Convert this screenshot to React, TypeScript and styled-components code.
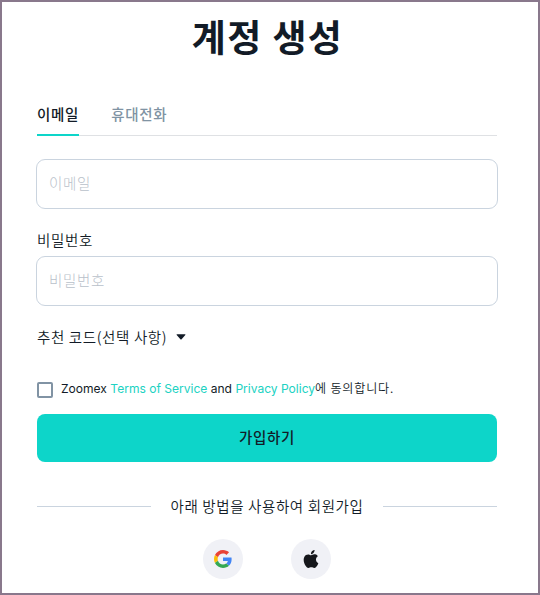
import React, { useState } from 'react';
import styled, { createGlobalStyle } from 'styled-components';

const ink = '#121b27';
const teal = '#0dd5c9';
const korean = '"Noto Sans CJK KR", sans-serif';

const GlobalStyle = createGlobalStyle`
  * { box-sizing: border-box; }
  body { margin: 0; background: #fff; }
`;

const Card = styled.main`
  width: 540px;
  height: 595px;
  padding: 0 41px 0 35px;
  overflow: hidden;
  border: 2px solid #89788c;
  background: #fff;
  color: ${ink};
  font-family: ${korean};
  font-size: 14px;
`;

const Title = styled.h1`
  height: 72px;
  margin: 0;
  font-size: 37px;
  line-height: 69px;
  font-weight: 700;
  text-align: center;
  text-indent: 1px;
  letter-spacing: 1.4px;
  white-space: nowrap;
`;

const Tabs = styled.div`
  display: flex;
  gap: 32px;
  height: 42px;
  margin-top: 20px;
  box-shadow: inset 0 -1px #dfe1e4;
`;

const Tab = styled.button<{ $active?: boolean }>`
  height: 42px;
  padding: 0;
  border: 0;
  border-bottom: 2px solid ${({ $active }) => ($active ? teal : 'transparent')};
  background: none;
  color: ${({ $active }) => ($active ? ink : '#8093a3')};
  font: 500 14.5px/40px ${korean};
  letter-spacing: 0.7px;
  white-space: nowrap;
`;

const Field = styled.input`
  display: block;
  width: 462px;
  height: 50px;
  margin: 0 -1px;
  padding: 0 12px 4px;
  border: 1px solid #cad4df;
  border-radius: 9px;
  outline: none;
  color: ${ink};
  font: 300 14.5px ${korean};
  letter-spacing: 0.7px;

  &::placeholder { color: #b9c1ca; opacity: 1; }
`;

const EmailField = styled(Field)`
  margin-top: 23px;
`;

const Label = styled.label`
  display: block;
  height: 24px;
  margin-top: 23px;
  font-size: 14.5px;
  font-weight: 350;
  line-height: 16px;
  letter-spacing: 0.7px;
`;

const Referral = styled.button`
  display: flex;
  align-items: center;
  gap: 9px;
  height: 24px;
  margin-top: 19px;
  padding: 0;
  border: 0;
  background: none;
  color: ${ink};
  font: 350 14.5px/24px ${korean};
  letter-spacing: 0.62px;
`;

const Agreement = styled.div`
  display: flex;
  align-items: center;
  gap: 8px;
  height: 16px;
  margin-top: 33px;
  font-size: 12px;
  white-space: nowrap;
`;

const Checkbox = styled.input`
  appearance: none;
  width: 16px;
  height: 16px;
  margin: 0;
  border: 2px solid #8193a4;
  border-radius: 2px;

  &:checked { background: ${teal}; }
`;

const Terms = styled.span`
  height: 20px;
  font: 12.05px/15px Inter, ${korean};
`;

const KoreanSuffix = styled.span`
  font-family: ${korean};
  font-weight: 350;
  letter-spacing: 0.8px;
`;

const TermsLink = styled.a`
  color: #20d2c2;
  text-decoration: none;
`;

const Submit = styled.button`
  width: 100%;
  height: 48px;
  margin-top: 16px;
  padding: 0 0 4px;
  border: 0;
  border-radius: 8px;
  background: ${teal};
  color: ${ink};
  font: 500 14.5px ${korean};
  letter-spacing: 0.65px;
`;

const Divider = styled.div`
  display: flex;
  align-items: center;
  justify-content: space-between;
  height: 25px;
  margin-top: 32px;
  font-size: 14.5px;
  font-weight: 350;
  letter-spacing: 0.62px;
  white-space: nowrap;
`;

const DividerText = styled.span`
  height: 25px;
  line-height: 23px;
`;

const Rule = styled.span`
  width: 114px;
  height: 1px;
  background: #cad4df;
`;

const Providers = styled.div`
  display: flex;
  justify-content: center;
  gap: 48px;
  margin-top: 20px;
`;

const Provider = styled.button`
  display: grid;
  place-items: center;
  width: 40px;
  height: 40px;
  padding: 0;
  border: 0;
  border-radius: 50%;
  background: #f0f1f6;
`;

function GoogleIcon() {
  return (
    <svg width="18" height="18" viewBox="0 0 48 48">
      <path fill="#EA4335" d="M24 9.5c3.54 0 6.71 1.22 9.21 3.6l6.85-6.85C35.9 2.38 30.47 0 24 0 14.62 0 6.51 5.38 2.56 13.22l7.98 6.19C12.43 13.72 17.74 9.5 24 9.5z" />
      <path fill="#4285F4" d="M46.98 24.55c0-1.57-.15-3.09-.38-4.55H24v9.02h12.94c-.58 2.96-2.26 5.48-4.78 7.18l7.73 6c4.51-4.18 7.09-10.36 7.09-17.65z" />
      <path fill="#FBBC05" d="M10.53 28.59c-.48-1.45-.76-2.99-.76-4.59s.27-3.14.76-4.59l-7.98-6.19C.92 16.46 0 20.12 0 24c0 3.88.92 7.54 2.56 10.78l7.97-6.19z" />
      <path fill="#34A853" d="M24 48c6.48 0 11.93-2.13 15.89-5.81l-7.73-6c-2.15 1.45-4.92 2.3-8.16 2.3-6.26 0-11.57-4.22-13.47-9.91l-7.98 6.19C6.51 42.62 14.62 48 24 48z" />
    </svg>
  );
}

function AppleIcon() {
  return (
    <svg width="18" height="18" viewBox="0 0 24 24" fill="#15171b">
      <path d="M12.152 6.896c-.948 0-2.415-1.078-3.96-1.04-2.04.027-3.91 1.183-4.961 3.014-2.117 3.675-.546 9.103 1.519 12.09 1.013 1.454 2.208 3.09 3.792 3.039 1.52-.065 2.09-.987 3.935-.987 1.831 0 2.35.987 3.96.948 1.637-.026 2.676-1.48 3.676-2.948 1.156-1.688 1.636-3.325 1.662-3.415-.039-.013-3.182-1.221-3.22-4.857-.026-3.04 2.48-4.494 2.597-4.559-1.429-2.09-3.623-2.324-4.39-2.376-2-.156-3.675 1.09-4.61 1.09zM15.53 3.83c.843-1.012 1.4-2.427 1.245-3.83-1.207.052-2.662.805-3.532 1.818-.78.896-1.454 2.338-1.273 3.714 1.338.104 2.715-.688 3.559-1.701" />
    </svg>
  );
}

export default function App() {
  const [tab, setTab] = useState('email');
  return (
    <>
      <GlobalStyle />
      <Card>
        <Title>계정 생성</Title>
        <Tabs>
          <Tab $active={tab === 'email'} onClick={() => setTab('email')}>이메일</Tab>
          <Tab $active={tab === 'phone'} onClick={() => setTab('phone')}>휴대전화</Tab>
        </Tabs>
        <EmailField type="email" placeholder="이메일" />
        <Label htmlFor="password">비밀번호</Label>
        <Field id="password" type="password" placeholder="비밀번호" />
        <Referral>
          추천 코드(선택 사항)
          <svg width="10" height="6" viewBox="0 0 10 6" fill={ink}><path d="M1.1.2h7.8q1 0 .4.8L5.6 5.2q-.6.6-1.2 0L.7 1Q.1.2 1.1.2z" /></svg>
        </Referral>
        <Agreement>
          <Checkbox type="checkbox" aria-label="동의" />
          <Terms>
            Zoomex <TermsLink href="#terms">Terms of Service</TermsLink> and <TermsLink href="#privacy">Privacy Policy</TermsLink><KoreanSuffix>에 동의합니다.</KoreanSuffix>
          </Terms>
        </Agreement>
        <Submit>가입하기</Submit>
        <Divider><Rule /><DividerText>아래 방법을 사용하여 회원가입</DividerText><Rule /></Divider>
        <Providers>
          <Provider aria-label="Google"><GoogleIcon /></Provider>
          <Provider aria-label="Apple"><AppleIcon /></Provider>
        </Providers>
      </Card>
    </>
  );
}
